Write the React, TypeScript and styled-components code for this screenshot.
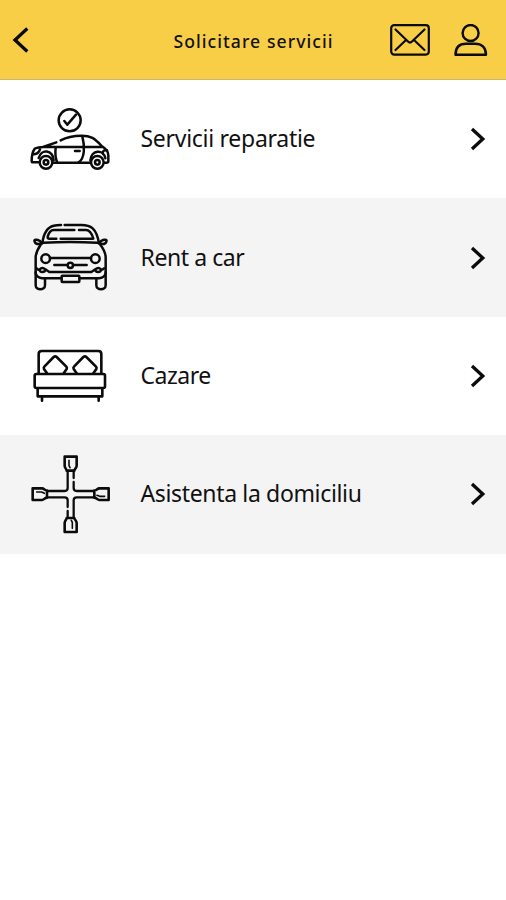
import React from 'react';
import styled, { createGlobalStyle } from 'styled-components';

const GlobalStyle = createGlobalStyle`
  * { box-sizing: border-box; }
  body { margin: 0; background: #fff; font-family: "Noto Sans", "Open Sans", sans-serif; color: #111; }
`;

const Screen = styled.main`
  min-height: 900px;
  background: #fff;
`;

const Header = styled.header`
  display: grid;
  grid-template-columns: 120px 1fr 120px;
  align-items: center;
  height: 80px;
  background: #f8ce46;
  border-bottom: 1px solid #cdb669;
`;

const Title = styled.h1`
  margin: 0;
  padding: 2px 0 0 1px;
  text-align: center;
  font-size: 17.6px;
  line-height: 26px;
  font-weight: 500;
  letter-spacing: 1.05px;
  white-space: nowrap;
`;

const IconButton = styled.button`
  display: flex;
  padding: 0;
  border: 0;
  background: none;
`;

const BackButton = styled(IconButton)`
  margin-left: 12px;
`;

const Actions = styled.div`
  display: flex;
  align-items: center;
  gap: 24px;
  padding-left: 4px;
`;

const Row = styled.button<{ $shaded: boolean }>`
  display: flex;
  align-items: center;
  width: 100%;
  height: 118.4px;
  padding: 0 20px;
  border: 0;
  background: ${p => (p.$shaded ? '#f4f4f4' : '#fff')};
  font: inherit;
  color: inherit;
  text-align: left;
`;

const Label = styled.span<{ $spacing: number }>`
  flex: 1;
  padding: 0 0 2px 20.5px;
  font-size: 23px;
  line-height: 32px;
  font-weight: 400;
  letter-spacing: ${p => p.$spacing}px;
  white-space: nowrap;
`;

const Drawing = styled.svg`
  display: block;
  flex: none;
  fill: none;
  stroke: #0b0b0b;
`;

const RepairIcon = () => (
  <Drawing width="100" height="96" viewBox="0 -27 300 288" strokeWidth="7.5" strokeLinecap="round" strokeLinejoin="round">
    <circle cx="149" cy="61" r="33" />
    <path d="M133 63l9 11 26-30" />
    <path d="M55 187H39q-4 0-4-5c0-14 2-26 9-36 5-4 16-4 25-5l40-14M69 141h180M122 121c18-10 39-14 63-14 27 0 39 8 60 31 15 9 20 16 20 28v18q0 4-6 4h-5M99 188h111" />
    <path d="M107 143c-2 17-2 30 5 45M187 109c7 27 9 66-12 79M165 153h14" />
    <path d="M39 163c9 0 17-2 21-15M261 151c-10-1-14 2-12 11M56 174c7-28 42-26 45 7M211 181c3-32 40-34 45-6" />
    <circle cx="78" cy="187" r="19" />
    <circle cx="78" cy="187" r="7" />
    <circle cx="232" cy="187" r="19" />
    <circle cx="232" cy="187" r="7" />
  </Drawing>
);

const CarIcon = () => (
  <Drawing width="100" height="96" viewBox="0 -16 300 288" strokeWidth="7.5" strokeLinecap="round" strokeLinejoin="round">
    <path d="M67 84c4-34 18-49 34-53q9-2 22-2M134 29h50c28 0 45 9 53 55" />
    <path d="M109 70H88q-6 0-5-6c4-14 9-20 18-20h62M177 44h21c13 0 18 12 22 26H122" />
    <path d="M44 79c-4-7 8-7 14-3 8 5 7 10 2 10-8 1-14 0-16-7ZM259 79c4-7-8-7-14-3-8 5-7 10-2 10 8 1 14 0 16-7Z" />
    <path d="M61 86l9-4q79-4 162 0l10 4M62 88c-9 13-14 22-15 37v49c2 9 11 14 19 15h58M241 88c10 13 15 22 16 37v49c-2 9-11 14-19 15h-58" />
    <circle cx="77" cy="130" r="13" />
    <circle cx="226" cy="130" r="13" />
    <path d="M90 128h123M103 149h38M161 149h39" />
    <circle cx="151" cy="150" r="8" />
    <path d="M50 159c3 3 6 6 9 3q8-8 17 0l12 8h126l12-8q9-8 17 0c3 3 6 0 9-3M59 162c-2 11 17 11 17 0M226 162c0 11 17 11 17 0" />
    <rect x="125" y="181" width="53" height="19" rx="2" />
    <path d="M47 171v39c0 16 28 16 28 0v-19M257 171v39c0 16-28 16-28 0v-19" />
  </Drawing>
);

const BedIcon = () => (
  <Drawing width="100" height="96" viewBox="0 -36 300 288" strokeWidth="7.8" strokeLinecap="round" strokeLinejoin="round">
    <path d="M56 100V42q0-9 9-9h170q9 0 9 9v58" />
    <rect x="44" y="102" width="211" height="42" rx="5" />
    <path d="M53 145v24h194v-24M66 171v11M236 171v11" />
    <path d="M81 100l-9-13q-2-4 1-7l28-29q5-4 9 0l29 29q3 3 1 7l-9 13M170 100l-9-13q-2-4 1-7l28-29q5-4 9 0l29 29q3 3 1 7l-9 13" />
  </Drawing>
);

const WrenchIcon = () => (
  <Drawing width="100" height="96" viewBox="0 3 300 288" strokeWidth="7.8" strokeLinecap="round" strokeLinejoin="round">
    <path d="M134 35h36v27c0 7-7 10-7 15h-23c0-5-6-8-6-15ZM134 261h36v-27c0-7-7-10-7-15h-23c0 5-6 8-6 15ZM38 130h28c6 0 9 7 15 7v21c-6 0-9 7-15 7H38ZM266 130h-28c-6 0-9 7-15 7v21c6 0 9 7 15 7h28Z" />
    <path d="M143 79v50q0 9-9 9H82M161 79v20M161 111v18q0 9 9 9h52M82 157h52q9 0 9 9v20M143 198v20M222 157h-52q-9 0-9 9v52" strokeWidth="6.8" />
    <path d="M147 46v16l3 6M157 250v-18l-3-6M50 141h15l8 4M254 154h-15l-8-3" strokeWidth="4.8" />
  </Drawing>
);

const Chevron = () => (
  <Drawing width="16" height="24" viewBox="0 0 16 24" strokeWidth="3.3">
    <path d="M2 2 12.8 12 2 22" />
  </Drawing>
);

const services = [
  { label: 'Servicii reparatie', spacing: -0.28, Icon: RepairIcon },
  { label: 'Rent a car', spacing: -0.42, Icon: CarIcon },
  { label: 'Cazare', spacing: -0.5, Icon: BedIcon },
  { label: 'Asistenta la domiciliu', spacing: -0.35, Icon: WrenchIcon },
];

export default function App() {
  return (
    <Screen>
      <GlobalStyle />
      <Header>
        <BackButton aria-label="Inapoi">
          <Drawing width="18" height="26" viewBox="0 0 18 26" strokeWidth="3.3">
            <path d="M15.3 1.5 3 13 15.3 24.5" />
          </Drawing>
        </BackButton>
        <Title>Solicitare servicii</Title>
        <Actions>
          <IconButton aria-label="Mesaje">
            <Drawing width="40" height="32" viewBox="0 0 40 32" strokeWidth="2.2" strokeLinecap="round" strokeLinejoin="round">
              <rect x="1.2" y="1.2" width="37.6" height="29.4" rx="3" />
              <path d="M5.5 5.5 18 17.5q2 2 4 0L34.5 5.5M5.5 26 16 16M34.5 26 24 16" />
            </Drawing>
          </IconButton>
          <IconButton aria-label="Cont">
            <Drawing width="34" height="32" viewBox="0 0 34 32" strokeWidth="2.4" strokeLinejoin="round">
              <circle cx="16.6" cy="9" r="8" />
              <path d="M1.5 30.7C1.5 23 6 19.8 12 19.8h9c6.500 0 11 3.500 11 10.900Z" />
            </Drawing>
          </IconButton>
        </Actions>
      </Header>
      {services.map(({ label, spacing, Icon }, i) => (
        <Row key={label} $shaded={i % 2 === 1}>
          <Icon />
          <Label $spacing={spacing}>{label}</Label>
          <Chevron />
        </Row>
      ))}
    </Screen>
  );
}
